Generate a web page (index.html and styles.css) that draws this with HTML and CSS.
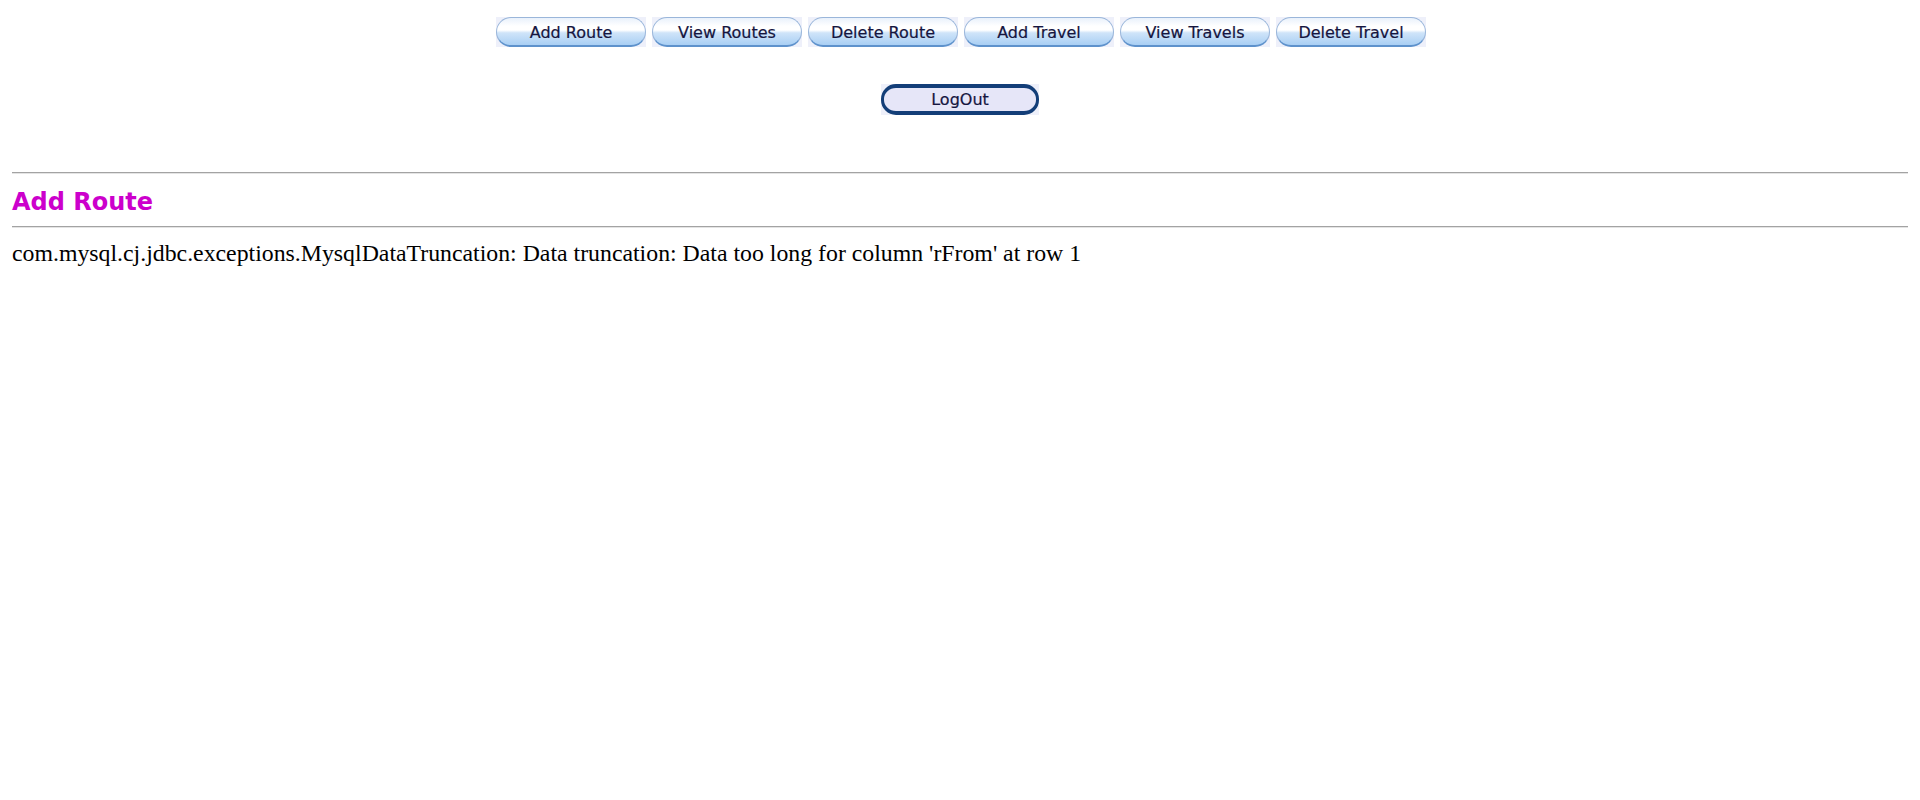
FILE: index.html
```html
<!DOCTYPE html>
<html>
<head>
<meta charset="utf-8">
<title>Add Route</title>
<link rel="stylesheet" href="styles.css">
</head>
<body>
<div class="nav">
  <div class="menu">
    <a class="btn" href="#"><span class="pill">Add Route</span></a>
    <a class="btn" href="#"><span class="pill">View Routes</span></a>
    <a class="btn" href="#"><span class="pill">Delete Route</span></a>
    <a class="btn" href="#"><span class="pill">Add Travel</span></a>
    <a class="btn" href="#"><span class="pill">View Travels</span></a>
    <a class="btn" href="#"><span class="pill">Delete Travel</span></a>
  </div>
  <div class="logout-row">
    <a class="logout" href="#"><span class="lpill">LogOut</span></a>
  </div>
</div>
<div class="content">
  <hr class="rule">
  <h2 class="title">Add Route</h2>
  <hr class="rule">
  <p class="msg">com.mysql.cj.jdbc.exceptions.MysqlDataTruncation: Data truncation: Data too long for column 'rFrom' at row 1</p>
</div>
</body>
</html>
```
FILE: styles.css
```css
html, body {
  background: #ffffff;
}
body {
  margin: 8px;
  font-family: "Liberation Serif", "Times New Roman", serif;
  font-size: 16px;
  color: #000;
}
.nav {
  padding-top: 9px;
}
.menu {
  display: flex;
  justify-content: center;
  gap: 6px;
  padding-left: 2px;
}
.btn {
  display: block;
  width: 150px;
  height: 30px;
  background: #eef0fa;
  text-decoration: none;
}
.pill {
  display: flex;
  align-items: center;
  justify-content: center;
  box-sizing: border-box;
  height: 30px;
  border-radius: 15px;
  border: 1px solid #9ab6da;
  border-bottom: 2px solid #5e92cc;
  background: linear-gradient(to bottom, #e9f1fb 0%, #ffffff 30%, #ffffff 45%, #cfe4f9 55%, #a9cff4 100%);
  font-family: "DejaVu Sans", Verdana, sans-serif;
  font-size: 16px;
  color: #15153f;
  padding-top: 1px;
  -webkit-text-stroke: 0.2px #15153f;
}
.logout-row {
  display: flex;
  justify-content: center;
  margin-top: 37px;
}
.logout {
  display: block;
  width: 158px;
  height: 31px;
  background: #eef0fa;
  text-decoration: none;
}
.lpill {
  display: flex;
  align-items: center;
  justify-content: center;
  box-sizing: border-box;
  height: 31px;
  border-radius: 15px;
  border: 3px solid #133e78;
  border-top-width: 4px;
  border-bottom-width: 4px;
  background: #e6e6f8;
  font-family: "DejaVu Sans", Verdana, sans-serif;
  font-size: 16px;
  color: #15153f;
  -webkit-text-stroke: 0.2px #15153f;
}
.content {
  padding: 0 4px;
  margin-top: 57px;
}
.rule {
  margin: 0;
  border: 0;
  border-top: 1px solid #a3a3a3;
  border-bottom: 1px solid #e4e4e4;
  height: 0;
}
.title {
  margin: 14px 0 10px;
  font-family: "DejaVu Sans", Verdana, sans-serif;
  font-weight: bold;
  font-size: 24px;
  line-height: 28px;
  color: #cc00cc;
}
.msg {
  margin: 12px 0 0;
  font-size: 23.8px;
  line-height: normal;
}
```
